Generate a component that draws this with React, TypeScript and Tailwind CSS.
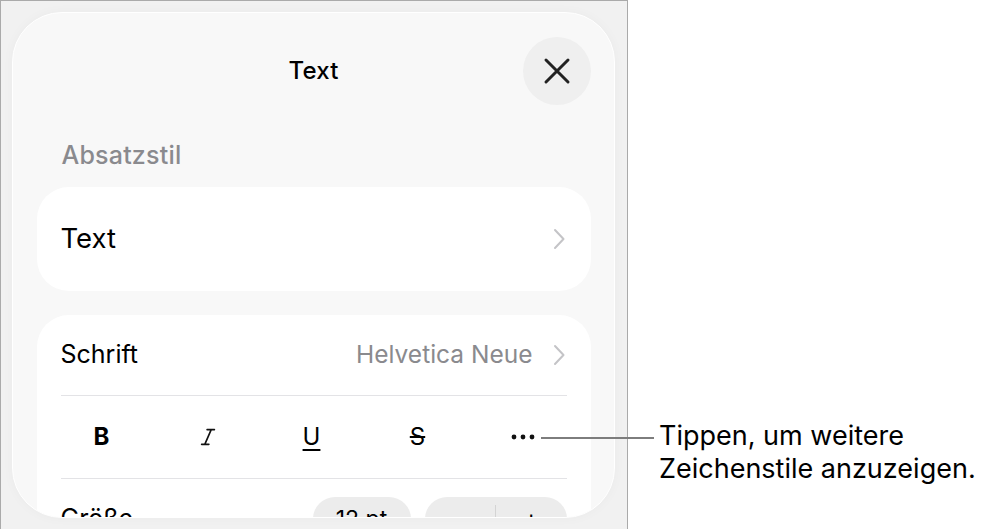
import React from "react";

function Chevron({ className = "" }: { className?: string }) {
  return (
    <svg width="12" height="22" viewBox="0 0 12 22" className={className} fill="none">
      <path d="M2 2 L10.5 11 L2 20" stroke="#c4c4c7" strokeWidth="2" strokeLinecap="round" strokeLinejoin="round" />
    </svg>
  );
}

export default function App() {
  return (
    <div className="relative flex w-[982px] h-[529px] bg-white overflow-hidden" style={{ fontFamily: "Inter, 'Noto Sans', sans-serif" }}>
      <div className="w-[628px] h-[529px] shrink-0 border-l border-t border-r border-[#aaaaaa] bg-[#f1f1f1] pt-[11px] pl-[11px] overflow-hidden">
        <div className="w-[603px] h-[506px] rounded-[50px] bg-[#f8f8f8] border-[1.5px] border-white shadow-[0_0_12px_rgba(0,0,0,0.03)] overflow-hidden px-[23.5px]">
          {/* header */}
          <div className="relative flex items-center justify-center h-[68px] mt-[23.5px]">
            <span className="text-[24px] font-medium text-black tracking-[0.2px]">Text</span>
            <div className="absolute right-0 top-0 w-[68px] h-[68px] rounded-full bg-[#efefef] flex items-center justify-center">
              <svg width="28" height="28" viewBox="0 0 28 28" fill="none">
                <path d="M3 3 L25 25 M25 3 L3 25" stroke="#222222" strokeWidth="3" strokeLinecap="round" />
              </svg>
            </div>
          </div>
          {/* section label */}
          <div className="mt-[35px] pl-[25px] text-[25px] font-medium text-[#8a8a8e] leading-[30px] tracking-[0.2px]">Absatzstil</div>
          {/* card 1 */}
          <div className="mt-[17px] h-[104px] rounded-[32px] bg-white flex items-center justify-between pl-[24px] pr-[26px]">
            <span className="text-[27.5px] text-black">Text</span>
            <Chevron />
          </div>
          {/* card 2 */}
          <div className="mt-[24px] rounded-[32px] bg-white px-[24px]">
            <div className="h-[81px] flex items-center justify-between border-b border-[#e3e3e6]">
              <span className="text-[25px] text-black">Schrift</span>
              <div className="flex items-center gap-[20px] pr-[2px]">
                <span className="text-[24.5px] text-[#8a8a8e]">Helvetica Neue</span>
                <Chevron />
              </div>
            </div>
            <div className="h-[83px] border-b border-[#e3e3e6]">
              <div className="h-full grid grid-cols-5 items-center -mx-[12px]">
                <div className="flex justify-center">
                  <span className="text-[24px] font-bold text-black">B</span>
                </div>
                <div className="flex justify-center">
                  <svg width="22" height="22" viewBox="0 0 24 24" fill="none" stroke="#111" strokeWidth="1.8" strokeLinecap="round">
                    <path d="M19 4h-8M13 20H5M15.5 4 8.5 20" />
                  </svg>
                </div>
                <div className="flex justify-center pr-[4px]">
                  <span className="text-[24px] text-black underline underline-offset-[4px] decoration-[1.5px]">U</span>
                </div>
                <div className="flex justify-center pr-[4px]">
                  <span className="text-[24px] text-black line-through decoration-[1.5px]">S</span>
                </div>
                <div className="flex justify-center pr-[6px]">
                  <svg width="24" height="6" viewBox="0 0 24 6">
                    <circle cx="3" cy="3" r="2.4" fill="#111" />
                    <circle cx="12" cy="3" r="2.4" fill="#111" />
                    <circle cx="21" cy="3" r="2.4" fill="#111" />
                  </svg>
                </div>
              </div>
            </div>
            <div className="h-[81px] flex items-center justify-between">
              <span className="text-[25px] text-black">Größe</span>
              <div className="flex items-center gap-[14px]">
                <div className="w-[98px] h-[44px] rounded-full bg-[#ececec] flex items-center justify-center text-[23px] text-black">12 pt</div>
                <div className="w-[142px] h-[44px] rounded-full bg-[#ececec] flex items-center">
                  <div className="flex-1 flex justify-center text-[24px]">–</div>
                  <div className="w-px h-[28px] bg-[#d4d4d4]" />
                  <div className="flex-1 flex justify-center text-[24px]">+</div>
                </div>
              </div>
            </div>
          </div>
        </div>
      </div>
      {/* annotation */}
      <div className="absolute left-[541px] top-[437px] w-[113px] h-[1.5px] bg-[#7d7d7d]" />
      <div className="absolute left-[659px] top-[419px] text-[27px] leading-[33px] text-black">
        Tippen, um weitere
        <br />
        Zeichenstile anzuzeigen.
      </div>
    </div>
  );
}
